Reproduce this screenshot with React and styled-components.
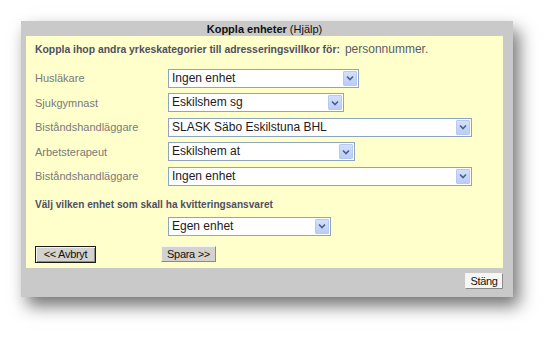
import React from 'react';
import styled, { createGlobalStyle } from 'styled-components';

const GlobalStyle = createGlobalStyle`
  html, body {
    margin: 0;
    padding: 0;
    background: #ffffff;
    font-family: "Liberation Sans", Arial, sans-serif;
  }
`;

const Page = styled.div`
  width: 555px;
  height: 340px;
  padding: 21px 0 0 21px;
  box-sizing: border-box;
`;

const Dialog = styled.div`
  width: 492px;
  height: 276px;
  background: #c9c9c9;
  padding: 0 10px 0 5px;
  box-sizing: border-box;
  display: flex;
  flex-direction: column;
  box-shadow: 6px 9px 16px rgba(0, 0, 0, 0.55);
`;

const TitleBar = styled.div`
  height: 15px;
  line-height: 17px;
  text-align: center;
  font-size: 11px;
  color: #111;
`;

const TitleStrong = styled.b`
  font-weight: bold;
`;

const Content = styled.div`
  height: 232px;
  background: #ffffcc;
  padding: 6px 0 0 9px;
  box-sizing: border-box;
  display: flex;
  flex-direction: column;
`;

const Heading = styled.div`
  font-size: ${(p) => p.$size || 10.4}px;
  font-weight: bold;
  color: #4f4f62;
  height: 14px;
  line-height: 14px;
  margin-top: ${(p) => p.$top || 0}px;
`;

const Plain = styled.span`
  font-weight: normal;
  font-size: 12px;
  color: #5c5c66;
  margin-left: 5px;
`;

const Form = styled.div`
  display: grid;
  grid-template-columns: 133px auto;
  grid-auto-rows: 20px;
  row-gap: 4.5px;
  align-items: center;
  margin-top: ${(p) => p.$top || 0}px;
`;

const Label = styled.div`
  font-size: 11px;
  color: #7a7a7a;
`;

const SelectBox = styled.div`
  grid-column: 2;
  width: ${(p) => p.$width}px;
  height: 19px;
  box-sizing: border-box;
  border: 1px solid #8fa5bf;
  background: #ffffff;
  display: flex;
  align-items: center;
  justify-content: space-between;
  padding: 1px 1px 1px 3px;
`;

const SelectText = styled.span`
  font-size: 12px;
  color: #221a22;
  line-height: 15px;
`;

const ArrowButton = styled.span`
  width: 14px;
  height: 15px;
  box-sizing: border-box;
  border: 1px solid #b7c9ef;
  border-radius: 1px;
  background: linear-gradient(#d3e0fc, #b9cdf6);
  display: flex;
  align-items: center;
  justify-content: center;
`;

const Select = ({ width, value }) => (
  <SelectBox $width={width}>
    <SelectText>{value}</SelectText>
    <ArrowButton>
      <svg width="8" height="6" viewBox="0 0 8 6">
        <path d="M1 1.5 L4 4.5 L7 1.5" fill="none" stroke="#4b5f8a" strokeWidth="1.6" />
      </svg>
    </ArrowButton>
  </SelectBox>
);

const ButtonRow = styled.div`
  display: flex;
  align-items: flex-start;
  margin-top: 10px;
`;

const Button = styled.button`
  font-family: "Liberation Sans", Arial, sans-serif;
  font-size: 11px;
  letter-spacing: -0.3px;
  color: #111;
  height: ${(p) => (p.$default ? 17 : 16)}px;
  width: ${(p) => p.$width}px;
  margin-left: ${(p) => p.$left || 0}px;
  padding: 0;
  box-sizing: border-box;
  background: ${(p) => (p.$light ? '#f6f6f4' : '#d4d2cc')};
  border: 1px solid;
  border-color: ${(p) => (p.$default ? '#1a1a1a' : '#f4f4f4 #8a8a8a #8a8a8a #f4f4f4')};
  box-shadow: ${(p) => (p.$default ? 'inset 1px 1px 0 #f4f4f4, inset -1px -1px 0 #8a8a8a' : 'none')};
  line-height: 13px;
`;

const Footer = styled.div`
  height: 29px;
  display: flex;
  justify-content: flex-end;
  align-items: flex-start;
  padding-top: 5px;
  box-sizing: border-box;
`;

const rows = [
  { label: 'Husläkare', value: 'Ingen enhet', width: 191 },
  { label: 'Sjukgymnast', value: 'Eskilshem sg', width: 176 },
  { label: 'Biståndshandläggare', value: 'SLASK Säbo Eskilstuna BHL', width: 304 },
  { label: 'Arbetsterapeut', value: 'Eskilshem at', width: 187 },
  { label: 'Biståndshandläggare', value: 'Ingen enhet', width: 304 },
];

export default function App() {
  return (
    <Page>
      <GlobalStyle />
      <Dialog>
        <TitleBar>
          <TitleStrong>Koppla enheter</TitleStrong> (Hjälp)
        </TitleBar>
        <Content>
          <Heading>
            Koppla ihop andra yrkeskategorier till adresseringsvillkor för:
            <Plain>personnummer.</Plain>
          </Heading>
          <Form $top={12}>
            {rows.map((r, i) => (
              <React.Fragment key={i}>
                <Label>{r.label}</Label>
                <Select width={r.width} value={r.value} />
              </React.Fragment>
            ))}
          </Form>
          <Heading $top={12} $size={10.1}>Välj vilken enhet som skall ha kvitteringsansvaret</Heading>
          <Form $top={4}>
            <Select width={163} value="Egen enhet" />
          </Form>
          <ButtonRow>
            <Button $default $width={61}>&lt;&lt; Avbryt</Button>
            <Button $width={55} $left={65}>Spara &gt;&gt;</Button>
          </ButtonRow>
        </Content>
        <Footer>
          <Button $light $width={38}>Stäng</Button>
        </Footer>
      </Dialog>
    </Page>
  );
}
